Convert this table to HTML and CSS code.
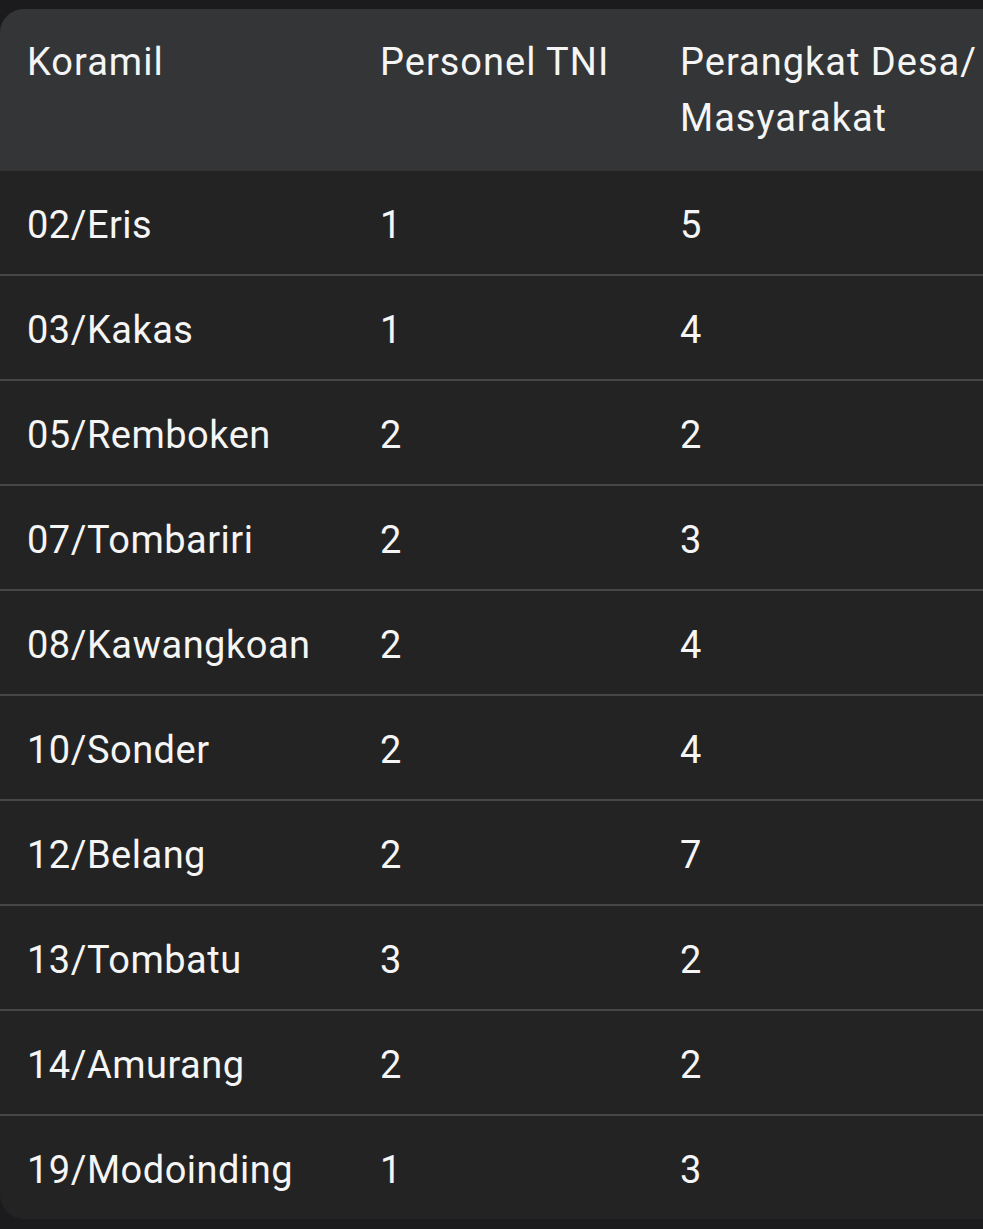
FILE: index.html
```html
<!DOCTYPE html>
<html lang="id">
<head>
    <meta charset="UTF-8">
    <meta name="viewport" content="width=device-width, initial-scale=1.0">
    <title>Koramil</title>
    <link rel="stylesheet" href="styles.css">
</head>
<body>

    <div class="table-wrap">
        <table class="data-table">
            <colgroup>
                <col class="col-koramil">
                <col class="col-tni">
                <col class="col-desa">
            </colgroup>
            <thead>
                <tr>
                    <th>Koramil</th>
                    <th>Personel TNI</th>
                    <th>Perangkat Desa/ Masyarakat</th>
                </tr>
            </thead>
            <tbody>
                <tr><td>02/Eris</td><td>1</td><td>5</td></tr>
                <tr><td>03/Kakas</td><td>1</td><td>4</td></tr>
                <tr><td>05/Remboken</td><td>2</td><td>2</td></tr>
                <tr><td>07/Tombariri</td><td>2</td><td>3</td></tr>
                <tr><td>08/Kawangkoan</td><td>2</td><td>4</td></tr>
                <tr><td>10/Sonder</td><td>2</td><td>4</td></tr>
                <tr><td>12/Belang</td><td>2</td><td>7</td></tr>
                <tr><td>13/Tombatu</td><td>3</td><td>2</td></tr>
                <tr><td>14/Amurang</td><td>2</td><td>2</td></tr>
                <tr><td>19/Modoinding</td><td>1</td><td>3</td></tr>
            </tbody>
        </table>
    </div>

</body>
</html>
```

FILE: styles.css
```css
html, body {
    overflow: hidden;
}
body {
    margin: 0;
    padding-top: 9px;
    background-color: #1b1b1d;
    font-family: Roboto, "Liberation Sans", sans-serif;
    color: #f5f5f5;
}
.table-wrap {
    width: 1100px;
    border-radius: 24px 0 0 24px;
    overflow: hidden;
    background-color: #232323;
}
.data-table {
    width: 100%;
    border-collapse: collapse;
    table-layout: fixed;
}
.col-koramil {
    width: 353px;
}
.col-tni {
    width: 300px;
}
.col-desa {
    width: 447px;
}
.data-table th {
    text-align: left;
    font-weight: 400;
    font-size: 38px;
    letter-spacing: 1px;
    line-height: 56px;
    padding: 25px 27px;
    background-color: #333537;
    vertical-align: top;
}
.data-table td {
    font-size: 38px;
    letter-spacing: 0.5px;
    line-height: 55px;
    padding: 27px 27px 21px;
    border-bottom: 2px solid #444648;
}
.data-table tbody tr:last-child td {
    border-bottom: none;
}
```
